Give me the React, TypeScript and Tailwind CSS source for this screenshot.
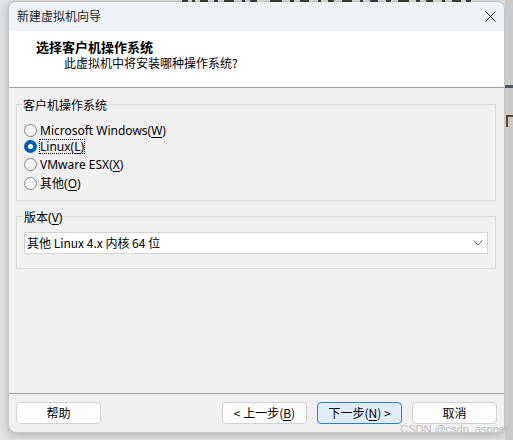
import React from "react";

function Radio({ checked }: { checked?: boolean }) {
  if (checked) {
    return (
      <span className="flex h-[13px] w-[13px] shrink-0 items-center justify-center rounded-full bg-[#005fb8]">
        <span className="h-[5px] w-[5px] rounded-full bg-white" />
      </span>
    );
  }
  return <span className="h-[13px] w-[13px] shrink-0 rounded-full border border-[#858585] bg-[#f7f7f7]" />;
}

function Row({ children, checked, focus, mt }: { children: React.ReactNode; checked?: boolean; focus?: boolean; mt: string }) {
  return (
    <div className={`flex h-[16px] items-center pl-[7px] ${mt}`}>
      <Radio checked={checked} />
      <span
        className={`ml-[2px] border leading-[13px] ${focus ? "border-dotted border-black" : "border-transparent"}`}
      >
        {children}
      </span>
    </div>
  );
}

function Btn({ children, primary }: { children: React.ReactNode; primary?: boolean }) {
  return (
    <div
      className={`flex h-[22px] w-[85px] items-center justify-center rounded-[4px] border ${
        primary ? "border-[#2f7fd6] bg-[#e0ecf8]" : "border-[#d2d2d2] bg-[#fdfdfd]"
      }`}
    >
      {children}
    </div>
  );
}

const marks = [
  [182, 6], [192, 3], [200, 8], [214, 4], [224, 10], [242, 3], [250, 7], [270, 12], [290, 4], [300, 9],
  [318, 3], [328, 6], [342, 10], [360, 3], [370, 8], [386, 5], [398, 11], [416, 4], [426, 7], [442, 3],
  [452, 9], [466, 5],
];

export default function App() {
  return (
    <div className="relative h-[440px] w-[513px] overflow-hidden bg-[#e4e4e4] font-['Segoe_UI','Noto_Sans','Noto_Sans_CJK_SC',sans-serif] text-[12px] text-black">
      {/* desktop background bits */}
      {marks.map(([x, w], i) => (
        <div key={i} className="absolute top-0 h-[2px] bg-[#3a3a3a]" style={{ left: x, width: w }} />
      ))}
      <div className="absolute right-0 top-0 h-full w-[8px] bg-[#cacaca]">
        <div className="mt-[85px] h-[3px] bg-[#4e5862]" />
        <div className="ml-[1px] mt-[27px] h-[12px] w-[7px] border-l-2 border-t-2 border-[#5a4a30]" />
      </div>

      <div className="pl-[8px] pt-[1px]">
        <div className="flex h-[432px] w-[497px] flex-col overflow-hidden rounded-[8px] border border-[#c4c4c4] bg-[#f0f0f0] shadow-[0_2px_10px_rgba(0,0,0,0.25)]">
          {/* title bar */}
          <div className="flex h-[29px] shrink-0 items-center justify-between bg-[#eef3f8] pb-[2px] pl-[8px] pr-[8px]">
            <span className="font-['Noto_Sans_CJK_SC',sans-serif] text-[12px] text-[#1a1a1a]">新建虚拟机向导</span>
            <svg width="11" height="11" viewBox="0 0 11 11" className="mt-[2px]">
              <path d="M0.5 0.5 L10.5 10.5 M10.5 0.5 L0.5 10.5" stroke="#1a1a1a" strokeWidth="1" />
            </svg>
          </div>
          {/* header */}
          <div className="h-[56px] shrink-0 bg-white pt-[7px] font-['Noto_Sans_CJK_SC',sans-serif]">
            <div className="pl-[27px] text-[13px] font-bold leading-[17px]">选择客户机操作系统</div>
            <div className="pl-[55px] text-[12px] leading-[15px]">此虚拟机中将安装哪种操作系统?</div>
          </div>
          <div className="h-px shrink-0 bg-[#a0a0a0]" />
          {/* body */}
          <div className="flex flex-1 flex-col">
            <div className="relative ml-[7px] mt-[16px] h-[97px] w-[480px] border border-[#dadada] pt-[17px]">
              <span className="absolute -top-[8px] left-[5px] bg-[#f0f0f0] px-[1px] font-['Noto_Sans_CJK_SC',sans-serif] leading-[16px]">
                客户机操作系统
              </span>
              <Row mt="mt-0">
                Microsoft Windows(<span className="underline underline-offset-2">W</span>)
              </Row>
              <Row mt="mt-0" checked focus>
                Linux(<span className="underline underline-offset-2">L</span>)
              </Row>
              <Row mt="mt-[2px]">
                VMware ESX(<span className="underline underline-offset-2">X</span>)
              </Row>
              <Row mt="mt-[3px]">
                <span className="font-['Noto_Sans_CJK_SC',sans-serif]">其他</span>(
                <span className="underline underline-offset-2">O</span>)
              </Row>
            </div>
            <div className="relative ml-[7px] mt-[15px] h-[53px] w-[480px] border border-[#dadada] pt-[15px]">
              <span className="absolute -top-[8px] left-[6px] bg-[#f0f0f0] px-[1px] leading-[16px]">
                <span className="font-['Noto_Sans_CJK_SC',sans-serif]">版本</span>(
                <span className="underline underline-offset-2">V</span>)
              </span>
              <div className="mx-[7px] flex h-[22px] items-center justify-between border border-[#d4d4d4] bg-white pl-[2px] pr-[4px]">
                <span className="font-['Noto_Sans_CJK_SC',sans-serif]">其他 Linux 4.x 内核 64 位</span>
                <svg width="10" height="6" viewBox="0 0 10 6">
                  <path d="M0.5 0.5 L5 5 L9.5 0.5" fill="none" stroke="#6a6a6a" strokeWidth="1" />
                </svg>
              </div>
            </div>
            <div className="flex-1" />
            <div className="h-px shrink-0 bg-[#a0a0a0]" />
            <div className="flex shrink-0 items-center pb-[8px] pl-[7px] pr-[7px] pt-[8px] font-['Noto_Sans_CJK_SC',sans-serif]">
              <Btn>帮助</Btn>
              <div className="flex-1" />
              <div className="flex gap-[10px]">
                <Btn>
                  &lt; 上一步(<span className="underline underline-offset-2">B</span>)
                </Btn>
                <Btn primary>
                  下一步(<span className="underline underline-offset-2">N</span>) &gt;
                </Btn>
                <Btn>取消</Btn>
              </div>
            </div>
          </div>
        </div>
      </div>

      <div className="absolute bottom-[5px] right-[5px] font-['Liberation_Sans',sans-serif] text-[11px] leading-[11px] text-[#c2c2c2]">
        CSDN @csdn_aspnet
      </div>
    </div>
  );
}
